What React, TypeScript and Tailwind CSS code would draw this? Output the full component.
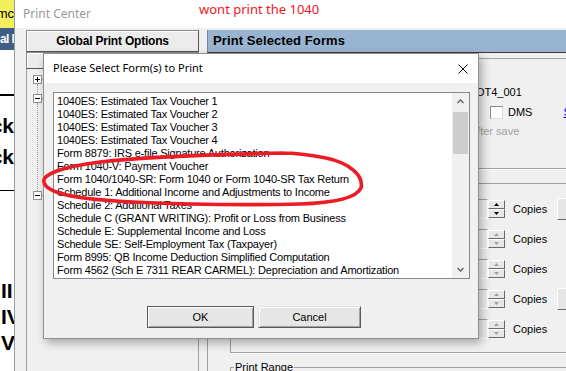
import React from "react";

const forms = [
  "1040ES: Estimated Tax Voucher 1",
  "1040ES: Estimated Tax Voucher 2",
  "1040ES: Estimated Tax Voucher 3",
  "1040ES: Estimated Tax Voucher 4",
  "Form 8879: IRS e-file Signature Authorization",
  "Form 1040-V: Payment Voucher",
  "Form 1040/1040-SR: Form 1040 or Form 1040-SR Tax Return",
  "Schedule 1: Additional Income and Adjustments to Income",
  "Schedule 2: Additional Taxes",
  "Schedule C (GRANT WRITING): Profit or Loss from Business",
  "Schedule E: Supplemental Income and Loss",
  "Schedule SE: Self-Employment Tax (Taxpayer)",
  "Form 8995: QB Income Deduction Simplified Computation",
  "Form 4562 (Sch E 7311 REAR CARMEL): Depreciation and Amortization",
];

// rows in the "copies" group; the first one is enabled
const copyRows = [
  { enabled: true, button: true },
  { enabled: false, button: false },
  { enabled: false, button: false },
  { enabled: false, button: true },
  { enabled: false, button: false },
];

function TreeBox({ plus }: { plus?: boolean }) {
  return (
    <div className="flex items-center">
      <span className="relative flex h-[9px] w-[9px] items-center justify-center border border-[#919191] bg-white">
        <span className="absolute h-px w-[5px] bg-black" />
        {plus && <span className="absolute h-[5px] w-px bg-black" />}
      </span>
      <span className="w-[6px] border-t border-dotted border-[#a0a0a0]" />
    </div>
  );
}

function Stem({ h }: { h: string }) {
  return <div className={`ml-[4px] border-l border-dotted border-[#a0a0a0] ${h}`} />;
}

function Spinner({ enabled }: { enabled: boolean }) {
  const arrow = enabled ? "#000" : "#a0a0a0";
  return (
    <div className="flex h-[18px] w-[17px] flex-col">
      {[0, 1].map((i) => (
        <div
          key={i}
          className="flex flex-1 items-center justify-center border border-b-[#696969] border-l-white border-r-[#696969] border-t-white bg-[#e8e8e8]"
        >
          <svg width="5" height="3" viewBox="0 0 5 3">
            {i === 0 ? <path d="M2.5 0 L5 3 L0 3 Z" fill={arrow} /> : <path d="M0 0 L5 0 L2.5 3 Z" fill={arrow} />}
          </svg>
        </div>
      ))}
    </div>
  );
}

function BackgroundDoc() {
  return (
    <div className="flex w-[14px] shrink-0 flex-col overflow-hidden bg-white">
      <div className="flex h-[28px] shrink-0 items-center justify-end whitespace-nowrap bg-[#f2ef5e] text-[13px]">
        Namc
      </div>
      <div className="flex h-[22px] shrink-0 items-center whitespace-nowrap bg-[#3f5e86] text-[12px] font-bold tracking-[-0.6px] text-white">
        al I
      </div>
      <div className="mt-[44px] h-[2px] shrink-0 bg-black" />
      <div className="mt-[14px] flex h-[31px] shrink-0 items-center justify-end whitespace-nowrap text-[21px] font-bold">
        Check
      </div>
      <div className="flex h-[31px] shrink-0 items-center justify-end whitespace-nowrap text-[21px] font-bold">
        Check
      </div>
      <div className="mt-[18px] h-px shrink-0 bg-black" />
      <div className="mt-[87px] flex flex-col whitespace-nowrap pl-px text-[21px] font-bold leading-[26px]">
        <span>II</span>
        <span>IV</span>
        <span>V</span>
      </div>
    </div>
  );
}

function PrintCenter() {
  return (
    <div className="flex min-w-0 flex-1 flex-col border-l border-[#9a9a9a]">
      <div className="flex h-[28px] shrink-0 bg-white pl-[8px] font-['Noto_Sans',sans-serif]">
        <span className="mt-[5px] text-[12px] leading-[17px] text-[#9a9a9a]">Print Center</span>
        <span className="ml-[108px] text-[13px] leading-[18px] text-[#f0161e]">wont print the 1040</span>
      </div>
      <div className="flex flex-1 gap-[8px] bg-[#f0f0f0] pl-[11px] pt-[2px]">
        <div className="flex w-[173px] shrink-0 flex-col">
          <div className="flex h-[22px] shrink-0 items-center justify-center border border-[#8a8a8a] border-b-[#555] border-r-[#555] bg-[#ececec] text-[12px] font-bold tracking-[-0.2px] shadow-[inset_1px_1px_0_#fff]">
            Global Print Options
          </div>
          <div className="h-[17px] shrink-0 border border-[#8a8a8a] border-b-[#555] bg-[#ececec] shadow-[inset_1px_1px_0_#fff]" />
          <div className="flex flex-1 flex-col border-x border-[#a0a0a0] bg-[#f0f0f0] pl-[6px] pt-[6px]">
            <TreeBox plus />
            <Stem h="h-[10px]" />
            <TreeBox />
            <Stem h="h-[88px]" />
            <TreeBox />
          </div>
        </div>

        <div className="flex min-w-0 flex-1 flex-col">
          <div className="flex h-[23px] shrink-0 items-center border-b border-l border-b-[#3a3a3a] border-l-[#6f86a0] bg-[#98b4d0] pl-[5px] text-[13px] font-bold tracking-[0.1px]">
            Print Selected Forms
          </div>
          <div className="flex flex-1 flex-col border-l border-[#a0a0a0] pl-[22px] text-[11px]">
            <div className="mt-[5px] flex h-[111px] w-[400px] shrink-0 flex-col border border-[#a0a0a0] pt-[27px] shadow-[1px_1px_0_#fff]">
              <div className="h-[12px] whitespace-nowrap pl-[237px] leading-[12px]">DOT4_001</div>
              <div className="mt-[8px] flex h-[13px] items-center whitespace-nowrap pl-[259px]">
                <span className="h-[13px] w-[13px] border border-[#8a8a8a] border-b-[#dcdcdc] border-r-[#dcdcdc] bg-white" />
                <span className="ml-[5px]">DMS</span>
                <span className="ml-[31px] text-[#0000ff] underline">Select</span>
              </div>
              <div className="mt-[6px] h-[12px] whitespace-nowrap pl-[240px] leading-[12px] text-[#a0a0a0]">
                after save
              </div>
            </div>

            <div className="mt-[14px] flex h-[170px] w-[400px] shrink-0 flex-col gap-[10px] border border-[#a0a0a0] pt-[15px] shadow-[1px_1px_0_#fff]">
              {copyRows.map((r, i) => (
                <div key={i} className="flex h-[20px] items-center pl-[197px]">
                  <div className="h-[20px] w-[60px] border border-[#a0a0a0] border-b-white border-r-white bg-[#f0f0f0]" />
                  <Spinner enabled={r.enabled} />
                  <span className="ml-[8px] w-[44px]">Copies</span>
                  {r.button && (
                    <div className="h-[22px] w-[60px] border border-l-white border-t-white border-b-[#696969] border-r-[#696969] bg-[#e6e6e6]" />
                  )}
                </div>
              ))}
            </div>

            <fieldset className="mt-[8px] h-[40px] w-[400px] shrink-0 border border-[#a0a0a0] pl-[3px]">
              <legend className="px-px text-[11px] leading-[13px]">Print Range</legend>
            </fieldset>
          </div>
        </div>
      </div>
    </div>
  );
}

function FormDialog() {
  return (
    <div className="absolute left-[43px] top-[53px] flex h-[286px] w-[436px] flex-col border border-[#8f8f8f] bg-[#f0f0f0] shadow-[3px_4px_9px_rgba(0,0,0,0.3)]">
      <div className="flex h-[29px] shrink-0 items-center justify-between bg-white pl-[9px] pr-[10px]">
        <span className="font-['Noto_Sans',sans-serif] text-[11px]">Please Select Form(s) to Print</span>
        <svg width="10" height="10" viewBox="0 0 10 10">
          <path d="M0.5 0.5 L9.5 9.5 M9.5 0.5 L0.5 9.5" stroke="#111" strokeWidth="1" />
        </svg>
      </div>

      <div className="ml-[9px] mt-[9px] flex h-[187px] w-[417px] border border-[#828790] bg-white">
        <div className="min-w-0 flex-1 pl-[3px] pt-[2px] text-[11px] leading-[13px] tracking-[-0.2px]">
          {forms.map((f) => (
            <div key={f} className="h-[13px] overflow-hidden whitespace-nowrap">
              {f}
            </div>
          ))}
        </div>
        <div className="flex w-[17px] flex-col bg-[#f0f0f0]">
          <div className="flex h-[17px] items-center justify-center">
            <svg width="7" height="5" viewBox="0 0 7 5">
              <path d="M0.5 4 L3.5 1 L6.5 4" stroke="#606060" strokeWidth="1.3" fill="none" />
            </svg>
          </div>
          <div className="mx-px mt-[2px] h-[42px] bg-[#cdcdcd]" />
          <div className="flex-1" />
          <div className="flex h-[17px] items-center justify-center">
            <svg width="7" height="5" viewBox="0 0 7 5">
              <path d="M0.5 1 L3.5 4 L6.5 1" stroke="#606060" strokeWidth="1.3" fill="none" />
            </svg>
          </div>
        </div>
      </div>

      <div className="mt-[27px] flex text-[11px]">
        <div className="ml-[103px] flex h-[22px] w-[107px] items-center justify-center border border-[#5a5a5a] bg-[#e6e6e6] shadow-[inset_1px_1px_0_#fff,inset_-1px_-1px_0_#a0a0a0]">
          OK
        </div>
        <div className="ml-[4px] flex h-[22px] w-[103px] items-center justify-center border border-l-[#e3e3e3] border-t-[#e3e3e3] border-b-[#5a5a5a] border-r-[#5a5a5a] bg-[#e6e6e6] shadow-[inset_1px_1px_0_#fff,inset_-1px_-1px_0_#a0a0a0]">
          Cancel
        </div>
      </div>
    </div>
  );
}

function RedCircle() {
  return (
    <svg className="pointer-events-none absolute left-0 top-0" width="566" height="371" viewBox="0 0 566 371">
      <path
        d="M283 153 C230 154 150 156 100 162 C60 167 42 175 44 182 C46 193 72 199 133 202 C200 205 260 205 300 204 C330 203 356 199 361 188 C364 176 350 163 326 158 C310 155 295 153 283 153"
        stroke="#ec1c24"
        strokeWidth="3.6"
        fill="none"
        strokeLinecap="round"
      />
    </svg>
  );
}

export default function App() {
  return (
    <div className="relative flex h-[371px] w-[566px] overflow-hidden bg-white font-['Liberation_Sans',Arial,sans-serif] text-black">
      <BackgroundDoc />
      <PrintCenter />
      <FormDialog />
      <RedCircle />
    </div>
  );
}
